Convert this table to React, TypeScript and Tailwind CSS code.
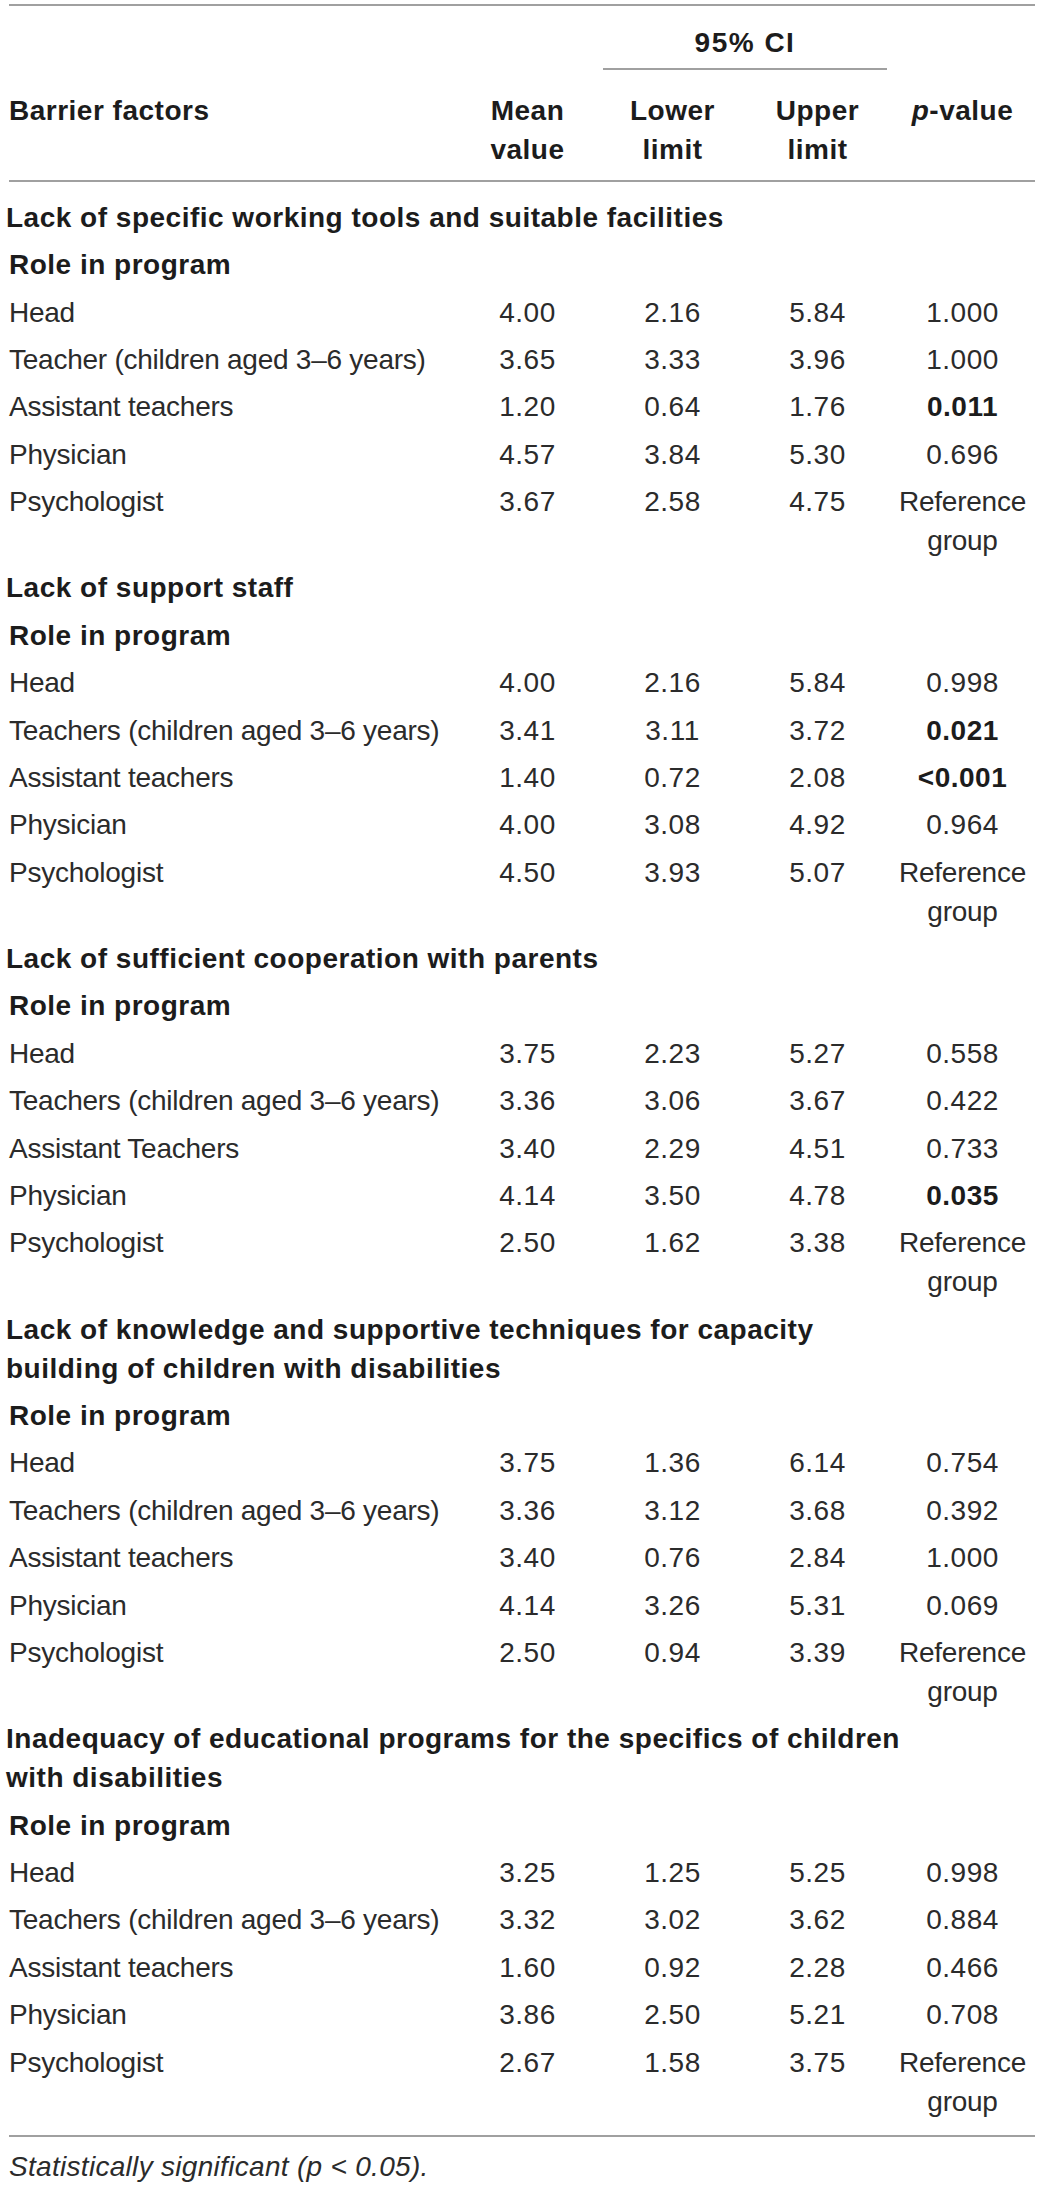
type Row = {
  label: string;
  mean: string;
  lower: string;
  upper: string;
  p: string;
  sig?: boolean;
};

type Section = { title: string[]; rows: Row[] };

const sections: Section[] = [
  {
    title: ["Lack of specific working tools and suitable facilities"],
    rows: [
      { label: "Head", mean: "4.00", lower: "2.16", upper: "5.84", p: "1.000" },
      { label: "Teacher (children aged 3–6 years)", mean: "3.65", lower: "3.33", upper: "3.96", p: "1.000" },
      { label: "Assistant teachers", mean: "1.20", lower: "0.64", upper: "1.76", p: "0.011", sig: true },
      { label: "Physician", mean: "4.57", lower: "3.84", upper: "5.30", p: "0.696" },
      { label: "Psychologist", mean: "3.67", lower: "2.58", upper: "4.75", p: "ref" },
    ],
  },
  {
    title: ["Lack of support staff"],
    rows: [
      { label: "Head", mean: "4.00", lower: "2.16", upper: "5.84", p: "0.998" },
      { label: "Teachers (children aged 3–6 years)", mean: "3.41", lower: "3.11", upper: "3.72", p: "0.021", sig: true },
      { label: "Assistant teachers", mean: "1.40", lower: "0.72", upper: "2.08", p: "<0.001", sig: true },
      { label: "Physician", mean: "4.00", lower: "3.08", upper: "4.92", p: "0.964" },
      { label: "Psychologist", mean: "4.50", lower: "3.93", upper: "5.07", p: "ref" },
    ],
  },
  {
    title: ["Lack of sufficient cooperation with parents"],
    rows: [
      { label: "Head", mean: "3.75", lower: "2.23", upper: "5.27", p: "0.558" },
      { label: "Teachers (children aged 3–6 years)", mean: "3.36", lower: "3.06", upper: "3.67", p: "0.422" },
      { label: "Assistant Teachers", mean: "3.40", lower: "2.29", upper: "4.51", p: "0.733" },
      { label: "Physician", mean: "4.14", lower: "3.50", upper: "4.78", p: "0.035", sig: true },
      { label: "Psychologist", mean: "2.50", lower: "1.62", upper: "3.38", p: "ref" },
    ],
  },
  {
    title: [
      "Lack of knowledge and supportive techniques for capacity",
      "building of children with disabilities",
    ],
    rows: [
      { label: "Head", mean: "3.75", lower: "1.36", upper: "6.14", p: "0.754" },
      { label: "Teachers (children aged 3–6 years)", mean: "3.36", lower: "3.12", upper: "3.68", p: "0.392" },
      { label: "Assistant teachers", mean: "3.40", lower: "0.76", upper: "2.84", p: "1.000" },
      { label: "Physician", mean: "4.14", lower: "3.26", upper: "5.31", p: "0.069" },
      { label: "Psychologist", mean: "2.50", lower: "0.94", upper: "3.39", p: "ref" },
    ],
  },
  {
    title: [
      "Inadequacy of educational programs for the specifics of children",
      "with disabilities",
    ],
    rows: [
      { label: "Head", mean: "3.25", lower: "1.25", upper: "5.25", p: "0.998" },
      { label: "Teachers (children aged 3–6 years)", mean: "3.32", lower: "3.02", upper: "3.62", p: "0.884" },
      { label: "Assistant teachers", mean: "1.60", lower: "0.92", upper: "2.28", p: "0.466" },
      { label: "Physician", mean: "3.86", lower: "2.50", upper: "5.21", p: "0.708" },
      { label: "Psychologist", mean: "2.67", lower: "1.58", upper: "3.75", p: "ref" },
    ],
  },
];

const cols = "grid grid-cols-[446px_145px_145px_145px_145px]";
const num = "text-center text-[28px] tracking-[0.5px] text-[#2b2b2b]";
const bold = "text-[28px] font-bold tracking-[0.5px] text-[#1c1c1c]";

function DataRow({ row }: { row: Row }) {
  return (
    <div className={`${cols} py-[4.2px] leading-[39px]`}>
      <div className="text-[28px] tracking-[-0.25px] text-[#2b2b2b]">{row.label}</div>
      <div className={num}>{row.mean}</div>
      <div className={num}>{row.lower}</div>
      <div className={num}>{row.upper}</div>
      {row.p === "ref" ? (
        <div className="text-center text-[28px] tracking-[-0.25px] text-[#2b2b2b]">
          Reference
          <br />
          group
        </div>
      ) : (
        <div className={row.sig ? `text-center ${bold}` : num}>{row.p}</div>
      )}
    </div>
  );
}

export default function App() {
  return (
    <div className="bg-white font-['Liberation_Sans',Arial,sans-serif]">
      <div className="ml-[9px] w-[1026px] pt-[4px]">
        <div className="h-[2px] bg-[#a0a0a0]" />

        {/* header */}
        <div className={`${cols} pt-[17px] leading-[39px]`}>
          <div />
          <div />
          <div className="col-span-2 flex flex-col">
            <div className={`pb-[6px] text-center ${bold} tracking-[1.5px]`}>95% CI</div>
            <div className="mx-[3px] h-[2px] bg-[#a0a0a0]" />
          </div>
        </div>
        <div className={`${cols} pt-[21px] pb-[11px] leading-[39px]`}>
          <div className={bold}>Barrier factors</div>
          <div className={`text-center ${bold}`}>
            Mean
            <br />
            value
          </div>
          <div className={`text-center ${bold}`}>
            Lower
            <br />
            limit
          </div>
          <div className={`text-center ${bold}`}>
            Upper
            <br />
            limit
          </div>
          <div className={`text-center ${bold}`}>
            <i>p</i>-value
          </div>
        </div>
        <div className="h-[2px] bg-[#a0a0a0]" />

        {/* body */}
        <div className="pt-[11.6px] pb-[10.4px]">
          {sections.map((s, i) => (
            <div key={i}>
              <div className={`-ml-[3px] py-[4.2px] leading-[39px] ${bold}`}>
                {s.title.map((t, j) => (
                  <div key={j}>{t}</div>
                ))}
              </div>
              <div className={`py-[4.2px] leading-[39px] ${bold}`}>Role in program</div>
              {s.rows.map((r, j) => (
                <DataRow key={j} row={r} />
              ))}
            </div>
          ))}
        </div>
        <div className="h-[2px] bg-[#a0a0a0]" />

        <p className="pt-[11px] text-[28px] italic leading-[37px] tracking-[0.3px] text-[#2b2b2b]">
          Statistically significant (p &lt; 0.05).
        </p>
      </div>
    </div>
  );
}
